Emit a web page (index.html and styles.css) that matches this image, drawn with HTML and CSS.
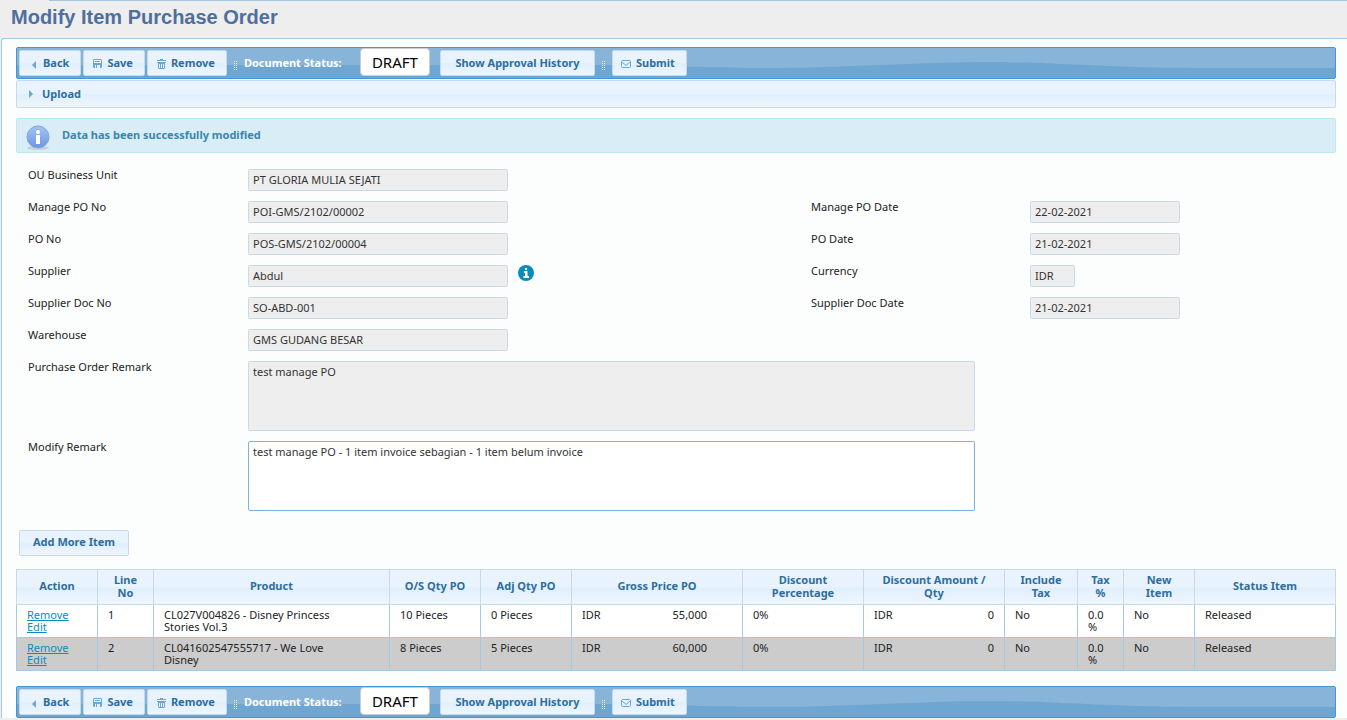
FILE: index.html
```
<!DOCTYPE html>
<html lang="en">
<head>
	<meta charset="utf-8">
	<title>Modify Item Purchase Order</title>
	<link rel="stylesheet" href="styles.css">
</head>
<body>

	<svg class="sprite" width="0" height="0" aria-hidden="true">
		<symbol id="icon-back" viewBox="0 0 16 16"><path d="M11 5v8L7 9z"/></symbol>
		<symbol id="icon-next" viewBox="0 0 16 16"><path d="M6 4v8l4-4z"/></symbol>
		<symbol id="icon-save" viewBox="0 0 16 16"><path fill-rule="evenodd" d="M4 4l1-1h7l1 1v7l-1 1H5l-1-1zM5 4v3h7V4zM6 9v3h1V9zM8 9v3h3V9z"/><path d="M6 5h5v1H6z"/></symbol>
		<symbol id="icon-trash" viewBox="0 0 16 16"><path fill-rule="evenodd" d="M4 4h3V3h3v1h3v1H4zM4 6h9v1H4zM5 7h7v5l-1 1H6l-1-1zM6 8v4h1V8zM8 8v4h1V8zM10 8v4h1V8z"/></symbol>
		<symbol id="icon-mail" viewBox="0 0 16 16"><path fill="none" stroke="#6da8d5" d="M3.5 5.500q0-1 1-1h7q1 0 1 1v5q0 1-1 1h-7q-1 0-1-1zM4 6l4 3.500L12 6"/></symbol>
	</svg>

	<h1>Modify Item Purchase Order</h1>

	<main class="panel">
		<div class="toolbar">
			<div class="group">
				<button type="button"><svg class="icon"><use href="#icon-back"/></svg>Back</button>
				<button type="button"><svg class="icon"><use href="#icon-save"/></svg>Save</button>
				<button type="button"><svg class="icon"><use href="#icon-trash"/></svg>Remove</button>
			</div>
			<span class="grip"></span>
			<span class="caption">Document Status:</span>
			<span class="status">DRAFT</span>
			<button type="button" class="history">Show Approval History</button>
			<span class="grip"></span>
			<button type="button"><svg class="icon"><use href="#icon-mail"/></svg>Submit</button>
		</div>

		<button type="button" class="upload"><svg class="icon"><use href="#icon-next"/></svg>Upload</button>

		<div class="message" role="status">
			<svg class="info" viewBox="0 0 26 26">
				<defs><linearGradient id="ball" x1="0" y1="0" x2="0" y2="1"><stop offset="0" stop-color="#a3c4f5"/><stop offset="1" stop-color="#6f94e0"/></linearGradient></defs>
				<ellipse cx="13" cy="23" rx="11" ry="2" fill="#c5d3dc"/>
				<circle cx="13" cy="12" r="11" fill="url(#ball)" stroke="#82a4e6"/>
				<circle cx="13" cy="7" r="2" fill="#fff"/>
				<path d="M11 10h4v9h-4z" fill="#fff"/>
			</svg>
			Data has been successfully modified
		</div>

		<form class="fields">
			<div class="row">
				<label for="ou">OU Business Unit</label>
				<input id="ou" type="text" value="PT GLORIA MULIA SEJATI" readonly>
			</div>
			<div class="row">
				<label for="manageNo">Manage PO No</label>
				<input id="manageNo" type="text" value="POI-GMS/2102/00002" readonly>
				<label for="manageDate" class="second">Manage PO Date</label>
				<input id="manageDate" class="date" type="text" value="22-02-2021" readonly>
			</div>
			<div class="row">
				<label for="poNo">PO No</label>
				<input id="poNo" type="text" value="POS-GMS/2102/00004" readonly>
				<label for="poDate" class="second">PO Date</label>
				<input id="poDate" class="date" type="text" value="21-02-2021" readonly>
			</div>
			<div class="row">
				<label for="supplier">Supplier</label>
				<input id="supplier" type="text" value="Abdul" readonly>
				<button type="button" class="about" aria-label="Supplier info">
					<svg viewBox="0 0 16 16"><circle cx="8" cy="8" r="8" fill="#0a8dbd"/><path fill="#fff" d="M7 3h2v2H7zM6 6h3.500v5H11v2H5.500v-2H7V8H6z"/></svg>
				</button>
				<label for="currency" class="second">Currency</label>
				<input id="currency" class="code" type="text" value="IDR" readonly>
			</div>
			<div class="row">
				<label for="docNo">Supplier Doc No</label>
				<input id="docNo" type="text" value="SO-ABD-001" readonly>
				<label for="docDate" class="second">Supplier Doc Date</label>
				<input id="docDate" class="date" type="text" value="21-02-2021" readonly>
			</div>
			<div class="row">
				<label for="warehouse">Warehouse</label>
				<input id="warehouse" type="text" value="GMS GUDANG BESAR" readonly>
			</div>
			<div class="row">
				<label for="poRemark">Purchase Order Remark</label>
				<textarea id="poRemark" readonly>test manage PO</textarea>
			</div>
			<div class="row">
				<label for="modifyRemark">Modify Remark</label>
				<textarea id="modifyRemark">test manage PO - 1 item invoice sebagian - 1 item belum invoice</textarea>
			</div>
		</form>

		<button type="button" class="add">Add More Item</button>

		<table class="items">
			<colgroup>
				<col class="c-action"><col class="c-line"><col class="c-product"><col class="c-qty"><col class="c-qty"><col class="c-gross">
				<col class="c-disc"><col class="c-amount"><col class="c-include"><col class="c-tax"><col class="c-new"><col class="c-status">
			</colgroup>
			<thead>
				<tr>
					<th>Action</th>
					<th>Line No</th>
					<th>Product</th>
					<th>O/S Qty PO</th>
					<th>Adj Qty PO</th>
					<th>Gross Price PO</th>
					<th>Discount Percentage</th>
					<th>Discount Amount / Qty</th>
					<th>Include Tax</th>
					<th>Tax %</th>
					<th>New Item</th>
					<th>Status Item</th>
				</tr>
			</thead>
			<tbody>
				<tr>
					<td><a href="#">Remove</a><a href="#">Edit</a></td>
					<td>1</td>
					<td>CL027V004826 - Disney Princess<br>Stories Vol.3</td>
					<td>10 Pieces</td>
					<td>0 Pieces</td>
					<td><div class="money gross"><span>IDR</span><span>55,000</span></div></td>
					<td>0%</td>
					<td><div class="money"><span>IDR</span><span>0</span></div></td>
					<td>No</td>
					<td>0.0 %</td>
					<td>No</td>
					<td>Released</td>
				</tr>
				<tr>
					<td><a href="#">Remove</a><a href="#">Edit</a></td>
					<td>2</td>
					<td>CL041602547555717 - We Love<br>Disney</td>
					<td>8 Pieces</td>
					<td>5 Pieces</td>
					<td><div class="money gross"><span>IDR</span><span>60,000</span></div></td>
					<td>0%</td>
					<td><div class="money"><span>IDR</span><span>0</span></div></td>
					<td>No</td>
					<td>0.0 %</td>
					<td>No</td>
					<td>Released</td>
				</tr>
			</tbody>
		</table>

		<div class="toolbar bottom">
			<div class="group">
				<button type="button"><svg class="icon"><use href="#icon-back"/></svg>Back</button>
				<button type="button"><svg class="icon"><use href="#icon-save"/></svg>Save</button>
				<button type="button"><svg class="icon"><use href="#icon-trash"/></svg>Remove</button>
			</div>
			<span class="grip"></span>
			<span class="caption">Document Status:</span>
			<span class="status">DRAFT</span>
			<button type="button" class="history">Show Approval History</button>
			<span class="grip"></span>
			<button type="button"><svg class="icon"><use href="#icon-mail"/></svg>Submit</button>
		</div>
	</main>

</body>
</html>
```
FILE: styles.css
```
* {
	box-sizing: border-box;
}

body {
	margin: 0;
	background-color: #eee;
	font-family: "Lucida Grande", "Lucida Sans", "Noto Sans", sans-serif;
	font-size: 11px;
	line-height: 12px;
	color: #222;
}

.sprite {
	display: block;
}

h1 {
	margin: 0 0 0 1px;
	padding: 5px 10px 9px;
	/* bottom edge of the tab strip */
	background: linear-gradient(#a6c9e2, #a6c9e2) 48px 0 / 100% 1px no-repeat;
	font-family: "Liberation Sans", Arial, sans-serif;
	font-size: 20px;
	line-height: 24px;
	color: #4f6f9f;
}

.panel {
	margin-left: 1px;
	padding: 8px 11px 0 14px;
	border: 1px solid #a6c9e2;
	border-right: 0;
	border-bottom: 0;
	border-top-left-radius: 3px;
	background-color: #fcfdfd;
}

button {
	height: 26px;
	padding: 0 11px;
	border: 1px solid #c5dbec;
	border-radius: 2px;
	background: linear-gradient(#e9f3fd 50%, #dfeffc 50%, #eef5fd);
	font-family: inherit;
	font-size: 11px;
	font-weight: bold;
	line-height: 12px;
	color: #2e6e9e;
	white-space: nowrap;
}

.icon {
	width: 16px;
	height: 16px;
	fill: #6da8d5;
}

/* toolbar */
.toolbar {
	display: flex;
	align-items: center;
	height: 32px;
	padding: 0 2px;
	border: 1px solid #4297d7;
	border-radius: 2px;
	background: #88b4d9 url("data:image/svg+xml,%3Csvg xmlns='http://www.w3.org/2000/svg' viewBox='0 0 1320 30' preserveAspectRatio='none'%3E%3Cpath d='M0 17H600C650 17 690 20 760 20S900 14 970 14 1090 20 1180 20H1320V30H0z' fill='%236fa6d1'/%3E%3C/svg%3E") no-repeat;
	background-size: 100% 100%;
}
.toolbar button {
	display: flex;
	align-items: center;
	justify-content: center;
}
.group {
	display: flex;
	gap: 2px;
}
.toolbar .icon {
	margin: 1px 2px 0 -6px;
}
.toolbar .history {
	min-width: 155px;
}
.grip {
	width: 3px;
	height: 9px;
	margin: 4px 7px 0;
	background: url("data:image/svg+xml,%3Csvg xmlns='http://www.w3.org/2000/svg' width='2' height='2'%3E%3Crect width='1' height='1' fill='%23e3edf6'/%3E%3C/svg%3E");
}
.caption {
	width: 116px;
	font-weight: bold;
	color: #fff;
}
.status {
	height: 28px;
	margin: 0 10px 2px 0;
	padding: 0 11px;
	border: 1px solid #ccc;
	border-radius: 4px;
	background-color: #fff;
	font-size: 15px;
	line-height: 26px;
	color: #000;
}

.upload {
	display: flex;
	align-items: center;
	width: 100%;
	height: 28px;
	margin-top: 1px;
	padding: 0 6px;
}
.upload .icon {
	margin-right: 3px;
}

.message {
	display: flex;
	height: 35px;
	margin-top: 10px;
	padding: 10px 8px 0;
	border: 1px solid #bce8f1;
	border-radius: 2px;
	background-color: #d9edf7;
	font-weight: bold;
	color: #3a87ad;
}
.info {
	width: 26px;
	height: 26px;
	margin: -4px 11px 0 0;
}

/* form */
.fields {
	margin-top: 16px;
	padding-left: 12px;
}
.row {
	display: flex;
	align-items: flex-start;
	margin-bottom: 10px;
}
.row label {
	width: 220px;
}
.row .second {
	width: 219px;
	margin-left: 303px;
}
.row .about + .second {
	margin-left: 277px;
}
input, textarea {
	width: 260px;
	height: 22px;
	padding: 2px 4px 4px;
	border: 1px solid #c5dbec;
	border-radius: 2px;
	background-color: #fff;
	font-family: inherit;
	font-size: 11px;
	line-height: 14px;
	color: #333;
}
input[readonly], textarea[readonly] {
	background-color: #eee;
}
.date {
	width: 150px;
}
.code {
	width: 45px;
}
textarea {
	width: 727px;
	height: 70px;
	padding-top: 3px;
	border-color: #77b3e3;
	resize: none;
}
textarea[readonly] {
	border-color: #c5dbec;
}
.about {
	width: 16px;
	height: 16px;
	margin-left: 10px;
	padding: 0;
	border: 0;
	background: none;
}
.about svg {
	display: block;
}

.add {
	display: block;
	margin: 19px 3px 13px;
	padding: 0 13px 2px;
}

/* item table */
.items {
	width: 100%;
	border-collapse: collapse;
	table-layout: fixed;
}
.items th {
	height: 35px;
	padding: 0 10px 3px;
	border: 1px solid #c5dbec;
	background: linear-gradient(#e9f3fd 50%, #dfeffc 50%, #eff6ff);
	line-height: 13px;
	color: #2e6e9e;
}
.items td {
	height: 33px;
	padding: 4px 10px;
	border: 1px solid #a6c9e2;
	background-color: #fff;
	vertical-align: top;
}
.items tr:nth-child(even) td {
	background-color: #ccc;
}
.items a {
	display: block;
	color: #0a8dbd;
}
.c-action { width: 81px; }
.c-line { width: 56px; }
.c-product { width: 236px; }
.c-qty { width: 91px; }
.c-gross { width: 171px; }
.c-disc { width: 121px; }
.c-amount { width: 141px; }
.c-include { width: 73px; }
.c-tax { width: 46px; }
.c-new { width: 71px; }
.money {
	display: flex;
	justify-content: space-between;
}
.gross {
	padding-right: 25px;
}

.bottom {
	margin-top: 15px;
}
```
